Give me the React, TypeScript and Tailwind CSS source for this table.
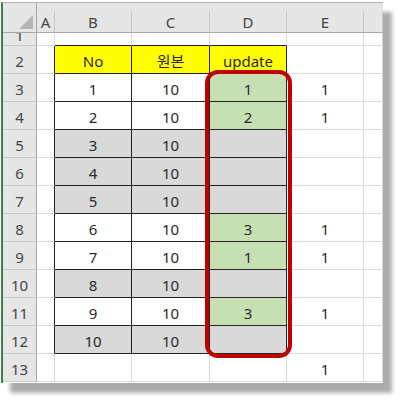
import React from "react";

const COLS = ["A", "B", "C", "D", "E", ""];
const WIDTHS = [18, 77, 78, 77, 77, 19];

type Cell = { t?: string; bg?: string };

const G = "#c6e0b4";
const Y = "#ffff00";
const S = "#d9d9d9";

const rows: { n: string; cells: Cell[] }[] = [
  { n: "2", cells: [{}, { t: "No", bg: Y }, { t: "원본", bg: Y }, { t: "update", bg: Y }, {}, {}] },
  { n: "3", cells: [{}, { t: "1" }, { t: "10" }, { t: "1", bg: G }, { t: "1" }, {}] },
  { n: "4", cells: [{}, { t: "2" }, { t: "10" }, { t: "2", bg: G }, { t: "1" }, {}] },
  { n: "5", cells: [{}, { t: "3", bg: S }, { t: "10", bg: S }, { bg: S }, {}, {}] },
  { n: "6", cells: [{}, { t: "4", bg: S }, { t: "10", bg: S }, { bg: S }, {}, {}] },
  { n: "7", cells: [{}, { t: "5", bg: S }, { t: "10", bg: S }, { bg: S }, {}, {}] },
  { n: "8", cells: [{}, { t: "6" }, { t: "10" }, { t: "3", bg: G }, { t: "1" }, {}] },
  { n: "9", cells: [{}, { t: "7" }, { t: "10" }, { t: "1", bg: G }, { t: "1" }, {}] },
  { n: "10", cells: [{}, { t: "8", bg: S }, { t: "10", bg: S }, { bg: S }, {}, {}] },
  { n: "11", cells: [{}, { t: "9" }, { t: "10" }, { t: "3", bg: G }, { t: "1" }, {}] },
  { n: "12", cells: [{}, { t: "10", bg: S }, { t: "10", bg: S }, { bg: S }, {}, {}] },
  { n: "13", cells: [{}, {}, {}, {}, { t: "1" }, {}] },
];

const FONT = { fontFamily: '"Noto Sans", "Noto Sans CJK KR", sans-serif' };

export default function App() {
  return (
    <div className="relative w-[400px] h-[401px] bg-white overflow-hidden" style={FONT}>
      <div className="absolute left-[1px] top-[2px] w-[382px] h-[381px] bg-white border-l-2 border-t border-l-[#3c7d4f] border-t-[#b4b4b4] shadow-[9px_10px_4px_rgba(0,0,0,0.33)] overflow-hidden flex flex-col text-[15px] text-[#2a2a2a]">
        {/* column header */}
        <div className="flex h-[30px] bg-[#e6e6e6] border-b border-[#a8a8a8] shrink-0">
          <div className="w-[34px] h-full border-r border-[#a8a8a8] flex items-end justify-end pr-[3px] pb-[3px] shrink-0">
            <svg width="14" height="14" viewBox="0 0 14 14">
              <polygon points="14,0 14,14 0,14" fill="#b5b5b5" />
            </svg>
          </div>
          {COLS.map((c, i) => (
            <div key={i} className="flex h-full shrink-0" style={{ width: WIDTHS[i] }}>
              <div className="flex-1 flex items-center justify-center pt-[9px] text-[#444]">{c}</div>
              <div className="w-px mt-[8px] bg-[#c9c9c9]" />
            </div>
          ))}
        </div>
        {/* row 1 partial */}
        <div className="flex h-[13px] shrink-0">
          <div className="w-[34px] h-full bg-[#e6e6e6] border-r border-b border-r-[#a8a8a8] border-b-[#c9c9c9] overflow-hidden shrink-0">
            <div className="h-[28px] mt-[-13px] flex items-center justify-center pt-[3px] text-[#444]">1</div>
          </div>
          {COLS.map((_, i) => (
            <div
              key={i}
              className={`h-full border-r border-b shrink-0 ${
                i >= 1 && i <= 3 ? "border-b-[#222]" : "border-b-[#dadada]"
              } border-r-[#dadada]`}
              style={{ width: WIDTHS[i] }}
            />
          ))}
        </div>
        {rows.map((r, ri) => {
          const inTable = ri <= 10;
          return (
            <div key={r.n} className="flex h-[28px] shrink-0">
              <div className="w-[34px] h-full bg-[#e6e6e6] border-r border-b border-r-[#a8a8a8] border-b-[#c9c9c9] flex items-center justify-center pt-[3px] text-[#444] shrink-0">
                {r.n}
              </div>
              {r.cells.map((c, ci) => {
                const black = inTable && ci <= 3;
                const blackB = inTable && ci >= 1 && ci <= 3;
                return (
                  <div
                    key={ci}
                    className={`h-full border-r border-b flex items-center justify-center pt-[3px] shrink-0 ${
                      black ? "border-r-[#222]" : "border-r-[#dadada]"
                    } ${blackB ? "border-b-[#222]" : "border-b-[#dadada]"}`}
                    style={{ width: WIDTHS[ci], background: c.bg ?? "#ffffff" }}
                  >
                    {c.t}
                  </div>
                );
              })}
            </div>
          );
        })}
      </div>
      {/* red highlight */}
      <div className="absolute left-[205px] top-[70px] w-[87px] h-[288px] border-[4px] border-[#c00000] rounded-[13px] pointer-events-none" />
    </div>
  );
}
